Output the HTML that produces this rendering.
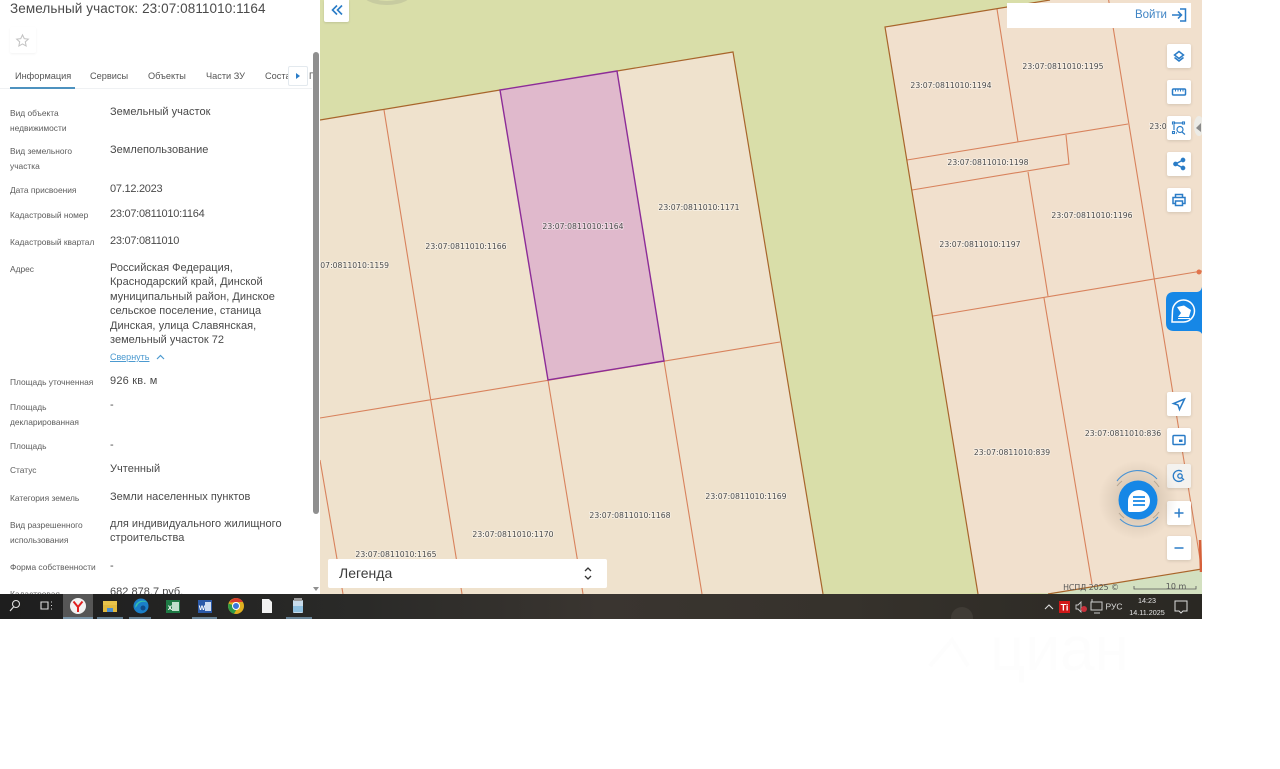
<!DOCTYPE html>
<html lang="ru"><head><meta charset="utf-8"><title>Земельный участок</title>
<style>
html,body{margin:0;padding:0;width:1280px;height:769px;overflow:hidden;background:#fff}
body{position:relative;font-family:"Liberation Sans",sans-serif}
.a{position:absolute;white-space:nowrap}
.l{position:absolute;left:10px;font-size:8.4px;line-height:14.5px;color:#5c5c5c;letter-spacing:0;white-space:nowrap}
.v{position:absolute;left:110px;font-size:11px;line-height:14.4px;color:#4a4a4a;letter-spacing:.02px;white-space:nowrap}
.n{letter-spacing:-.27px}
.t{position:absolute;top:70px;font-size:9.2px;line-height:12px;color:#555;white-space:nowrap}
.b{position:absolute;left:1167px;width:24px;height:24px;background:#fff;border-radius:2px;box-shadow:0 1px 3px rgba(0,0,0,.13)}
.b svg{display:block;width:24px;height:24px;fill:none;stroke:#2a7cc7;stroke-width:1.5}
.m text{font-family:"DejaVu Sans",sans-serif;font-size:7.7px;fill:#4c4c4c;stroke:#fff;stroke-opacity:.5;stroke-width:1.6px;paint-order:stroke;text-anchor:middle}
</style></head><body>

<svg class="a m" style="left:0;top:0" width="1202" height="594" viewBox="0 0 1202 594">
<rect x="320" y="0" width="882" height="594" fill="#d9dea9"/>
<polygon points="320,120 733,52 823,594 320,594" fill="#efe2cd"/>
<polygon points="885,27 1050,0 1202,0 1202,570 1050,593 978,594" fill="#f1e0cd"/>
<polygon points="1050,593 1202,570 1202,594 1040,594" fill="#d3e0c0"/>
<polygon points="500,90 617,71 664,361 548,380" fill="#e0b9cc"/>
<ellipse cx="387" cy="-8" rx="26" ry="13" fill="#c7cba0"/>
<ellipse cx="387" cy="-11" rx="22" ry="12" fill="#d9dea9"/>
<g fill="none" stroke="#d8825c" stroke-width="1.1">
<path d="M384,110L462,594M548,380L583,594M664,361L702,594M320,460L343,594M320,418L780,342"/>
<path d="M997,9L1018,142M907,160L1128,124M1107,-10L1201,565M1066,135L1069,164L912,190M1028,172L1048,296M933,316L1202,271M1044,298L1092,584"/>
</g>
<g fill="none" stroke="#a8652b" stroke-width="1.2">
<path d="M320,120L500,90M617,71L733,52L823,594"/>
<path d="M1050,0L885,27L978,594M1048,594L1202,569"/>
</g>
<path d="M617,71L500,90L548,380L664,361Z" fill="none" stroke="#8c2c98" stroke-width="1.4"/>
<path d="M1200,540L1201,572" stroke="#d6603a" stroke-width="2.5" fill="none"/>
<circle cx="1199" cy="272" r="2.5" fill="#e2744c"/>
<ellipse cx="1199" cy="126" rx="5" ry="10" fill="#ecebe6"/><path d="M1196,128l5,-5v9z" fill="#8a8a8a"/>
<text x="583" y="229">23:07:0811010:1164</text>
<text x="699" y="210">23:07:0811010:1171</text>
<text x="466" y="249">23:07:0811010:1166</text>
<text x="348.500" y="268">23:07:0811010:1159</text>
<text x="396" y="557">23:07:0811010:1165</text>
<text x="513" y="537">23:07:0811010:1170</text>
<text x="630" y="518">23:07:0811010:1168</text>
<text x="746" y="499">23:07:0811010:1169</text>
<text x="951" y="88">23:07:0811010:1194</text>
<text x="1063" y="69">23:07:0811010:1195</text>
<text x="988" y="165">23:07:0811010:1198</text>
<text x="1092" y="218">23:07:0811010:1196</text>
<text x="980" y="247">23:07:0811010:1197</text>
<text x="1012" y="455">23:07:0811010:839</text>
<text x="1123" y="436">23:07:0811010:836</text>
<text x="1158" y="129">23:0</text>
<text x="1091" y="590" style="font-size:7.800px;fill:#555;stroke:none;font-family:'DejaVu Sans'">НСПД 2025 ©</text>
<text x="1176" y="589" style="font-size:8px;fill:#555;stroke:none">10 m</text>
<path d="M1134,586v3h62v-3" stroke="#555" stroke-width=".8" fill="none"/>
</svg>

<!-- panel -->
<div class="a" style="left:0;top:0;width:320px;height:594px;background:#fff;overflow:hidden">
<div class="a" style="left:10px;top:0;font-size:13.5px;line-height:17px;color:#4a4a4a;letter-spacing:.09px">Земельный участок: 23:07:0811010:1164</div>
<div class="a" style="left:10px;top:27px;width:26px;height:26px;border-radius:2px;box-shadow:0 1px 2px rgba(0,0,0,.05)"></div>
<svg class="a" style="left:15px;top:33px" width="15" height="15" viewBox="0 0 24 24"><path d="M12,3l2.8,6 6.5,.8-4.8,4.4 1.3,6.5L12,17.5 6.2,20.7l1.3,-6.5L2.700,9.800 9.200,9Z" fill="none" stroke="#c4c4c4" stroke-width="1.7"/></svg>
<div class="t" style="left:15px">Информация</div>
<div class="t" style="left:90px">Сервисы</div>
<div class="t" style="left:148px">Объекты</div>
<div class="t" style="left:206px">Части ЗУ</div>
<div class="t" style="left:265px">Состав</div>
<div class="a" style="left:0;top:88px;width:312px;height:1px;background:#eff1f3"></div>
<div class="a" style="left:10px;top:87px;width:65px;height:2px;background:#4d92bf"></div>
<div class="a" style="left:288px;top:66px;width:20px;height:20px;background:#fff;border:1px solid #e3e9ee;box-sizing:border-box;border-radius:2px"></div>
<div class="a" style="left:296px;top:73px;width:0;height:0;border-left:4px solid #2a7cc7;border-top:3px solid transparent;border-bottom:3px solid transparent"></div>
<div class="a" style="left:309px;top:70px;font-size:9.200px;line-height:12px;color:#555">П</div>

<div class="l" style="top:106px">Вид объекта<br>недвижимости</div><div class="v" style="top:105px">Земельный участок</div>
<div class="l" style="top:144px">Вид земельного<br>участка</div><div class="v" style="top:143px">Землепользование</div>
<div class="l" style="top:183px">Дата присвоения</div><div class="v n" style="top:182px">07.12.2023</div>
<div class="l" style="top:208px">Кадастровый номер</div><div class="v n" style="top:207px">23:07:0811010:1164</div>
<div class="l" style="top:235px">Кадастровый квартал</div><div class="v n" style="top:234px">23:07:0811010</div>
<div class="l" style="top:262px">Адрес</div><div class="v" style="top:261px">Российская Федерация,<br>Краснодарский край, Динской<br>муниципальный район, Динское<br>сельское поселение, станица<br>Динская, улица Славянская,<br>земельный участок 72</div>
<div class="a" style="left:110px;top:351px;font-size:9px;line-height:12px;color:#4c9ad0;text-decoration:underline">Свернуть</div>
<svg class="a" style="left:156px;top:353px" width="9" height="8" viewBox="0 0 9 8"><path d="M1,6L4.500,2.500 8,6" fill="none" stroke="#4c9ad0" stroke-width="1.200"/></svg>
<div class="l" style="top:375px">Площадь уточненная</div><div class="v" style="top:374px;letter-spacing:.2px">926 кв. м</div>
<div class="l" style="top:400px">Площадь<br>декларированная</div><div class="v" style="top:398px">-</div>
<div class="l" style="top:439px">Площадь</div><div class="v" style="top:438px">-</div>
<div class="l" style="top:463px">Статус</div><div class="v" style="top:462px">Учтенный</div>
<div class="l" style="top:491px">Категория земель</div><div class="v" style="top:490px">Земли населенных пунктов</div>
<div class="l" style="top:518px">Вид разрешенного<br>использования</div><div class="v" style="top:517px">для индивидуального жилищного<br>строительства</div>
<div class="l" style="top:560px">Форма собственности</div><div class="v" style="top:559px">-</div>
<div class="l" style="top:587px">Кадастровая</div><div class="v" style="top:585px">682 878,7 руб.</div>

<div class="a" style="left:313px;top:52px;width:6px;height:462px;background:#8f8f8f;border-radius:3px"></div>
<div class="a" style="left:313px;top:587px;width:0;height:0;border-top:4px solid #8f8f8f;border-left:3px solid transparent;border-right:3px solid transparent"></div>
</div>

<!-- back -->
<div class="a" style="left:324px;top:0;width:25px;height:22px;background:#fff;border-radius:0 0 2px 2px;box-shadow:0 1px 2px rgba(0,0,0,.12)"></div>
<svg class="a" style="left:331px;top:4px" width="12" height="12" viewBox="0 0 12 12"><path d="M6,1.500L1.500,6 6,10.500M11,1.500L6.500,6 11,10.500" fill="none" stroke="#2a7cc7" stroke-width="1.600"/></svg>

<!-- legend -->
<div class="a" style="left:328px;top:559px;width:279px;height:29px;background:#fff;border-radius:2px"></div>
<div class="a" style="left:339px;top:565px;font-size:14px;line-height:17px;color:#3d3d3d;letter-spacing:0">Легенда</div>
<svg class="a" style="left:583px;top:566px" width="10" height="15" viewBox="0 0 10 15"><path d="M2,5L5,2 8,5M2,10L5,13 8,10" fill="none" stroke="#333" stroke-width="1.300"/></svg>

<!-- login -->
<div class="a" style="left:1007px;top:3px;width:184px;height:25px;background:#fff"></div>
<div class="a" style="left:1135px;top:8px;font-size:11.500px;line-height:14px;color:#3f84c4;letter-spacing:-.05px">Войти</div>
<svg class="a" style="left:1171px;top:7px" width="16" height="16" viewBox="0 0 16 16"><path d="M1,8H10M7,4.500L10.500,8 7,11.500M9,2H14.500V14H9" fill="none" stroke="#2a7cc7" stroke-width="1.500"/></svg>

<!-- side buttons -->
<div class="b" style="top:44px"><svg viewBox="0 0 24 24"><path d="M12,7.500L16.500,11 12,14.500 7.500,11Z"/><path d="M7.500,13.500L12,17 16.500,13.500"/></svg></div>
<div class="b" style="top:80px"><svg viewBox="0 0 24 24"><rect x="5.500" y="9" width="13" height="6" rx="1"/><path d="M8.500,9v2.500M11,9v2.500M13.500,9v2.500M16,9v2.500" stroke-width="1"/></svg></div>
<div class="b" style="top:116px"><svg viewBox="0 0 24 24"><path d="M8,7H15M7,9V14M9,17H10" stroke-width="1.200"/><rect x="5.500" y="6" width="2" height="2" stroke-width="1.100"/><rect x="15.500" y="6" width="2" height="2" stroke-width="1.100"/><rect x="5.500" y="15.500" width="2" height="2" stroke-width="1.100"/><circle cx="13" cy="13.500" r="3" stroke-width="1.200"/><path d="M15,16L18,18.500" stroke-width="1.200"/></svg></div>
<div class="b" style="top:152px"><svg viewBox="0 0 24 24"><path d="M16,8L8.500,12 16,16"/><circle cx="16" cy="8" r="1.600" fill="#2a7cc7"/><circle cx="8.500" cy="12" r="1.600" fill="#2a7cc7"/><circle cx="16" cy="16" r="1.600" fill="#2a7cc7"/></svg></div>
<div class="b" style="top:188px"><svg viewBox="0 0 24 24"><path d="M8.500,9V6.500h7V9M8.500,15.500H6V9.500h12v6h-2.500"/><rect x="8.500" y="13" width="7" height="4.500"/></svg></div>
<div class="b" style="top:392px"><svg viewBox="0 0 24 24"><path d="M17.500,7L6.500,11.500 11,13 12.500,17.500Z"/></svg></div>
<div class="b" style="top:428px"><svg viewBox="0 0 24 24"><rect x="6" y="7.500" width="12" height="9" rx="1"/><rect x="12" y="11.500" width="3.500" height="2.500" fill="#2a7cc7" stroke="none"/></svg></div>
<div class="b" style="top:464px;background:#f4f2ef"><svg viewBox="0 0 24 24"><path d="M15,7.500A5.500,5.500 0 1 0 15.500,16" stroke-width="1.300"/><circle cx="13" cy="12" r="2.200" stroke-width="1.300"/><path d="M14.500,13.500L17,16" stroke-width="1.300"/></svg></div>
<div class="b" style="top:501px"><svg viewBox="0 0 24 24"><path d="M12,7.500V16.500M7.500,12H16.500"/></svg></div>
<div class="b" style="top:536px"><svg viewBox="0 0 24 24"><path d="M7.500,12H16.500"/></svg></div>

<!-- blue tab -->
<svg class="a" style="left:1166px;top:286px" width="36" height="48" viewBox="0 0 36 48"><path d="M36,1C35,5 33,6 30,6H8Q0,6 0,14V37Q0,45 8,45H30C33,45 35,46 36,48Z" fill="#1687e6"/></svg>
<svg class="a" style="left:1169px;top:297px" width="29" height="29" viewBox="0 0 29 29"><path d="M3,25L3.500,13.500A11,11 0 1 1 14.500,25Z" fill="none" stroke="#fff" stroke-width="1.500"/><path d="M8,10L15,8.500 22,13 20,20H9L12,16Z" fill="#fff"/><path d="M9,21.500H21" stroke="#fff" stroke-width="1"/></svg>

<!-- chat -->
<div class="a" style="left:1098px;top:460px;width:80px;height:80px;border-radius:50%;background:radial-gradient(circle,rgba(100,80,60,.28),rgba(100,80,60,0) 70%)"></div>
<svg class="a" style="left:1110px;top:468px" width="56" height="64" viewBox="0 0 56 64">
<path d="M7,13A26,26 0 0 1 47,11" fill="none" stroke="#4a94d4" stroke-width="1.100"/>
<path d="M7,18A25,25 0 0 1 12,13M44,13A25,25 0 0 1 49,19" fill="none" stroke="#b5a692" stroke-width="1"/>
<path d="M10,51A26,26 0 0 0 48,49" fill="none" stroke="#4a94d4" stroke-width="1.100"/>
<path d="M9,45A25,25 0 0 0 14,50M43,50A25,25 0 0 0 49,44" fill="none" stroke="#b5a692" stroke-width="1"/>
<circle cx="28" cy="32" r="19.500" fill="#1687e6"/>
<path d="M18,43V33A11,11 0 1 1 29,44H19Z" fill="#fff"/>
<path d="M23,29H35M23,33H35M23,37H35" stroke="#1687e6" stroke-width="1.800"/>
</svg>

<!-- taskbar -->
<div class="a" style="left:0;top:594px;width:1202px;height:25px;background:linear-gradient(90deg,#1e1e1e 0,#2a2a28 30%,#3a3530 50%,#36322c 70%,#2a2823 100%)"></div>
<div class="a" style="left:63px;top:594px;width:30px;height:25px;background:#565656"></div>
<svg class="a" style="left:0;top:594px" width="320" height="25" viewBox="0 0 320 25">
<circle cx="16" cy="10" r="3.500" fill="none" stroke="#ddd" stroke-width="1.100"/><path d="M13.500,13L10,17" stroke="#ddd" stroke-width="1.200"/>
<path d="M41,8H48V15H41ZM51,8H52M51,11.500H52M51,15H52" fill="none" stroke="#ddd" stroke-width="1.100"/>
<circle cx="78" cy="12" r="8" fill="#f2f2f2"/><path d="M73.500,7.500L78,13V18M82.500,7.500L78,13" fill="none" stroke="#e02020" stroke-width="2"/>
<rect x="103" y="7" width="14" height="11" fill="#e8c34a"/><rect x="103" y="11" width="14" height="7" fill="#e0b93e"/><rect x="107" y="14" width="6" height="4" fill="#4a8fd0"/>
<circle cx="141" cy="12" r="7.500" fill="#1a7fc8"/><path d="M135,14A7.500,7.500 0 0 1 148,9C145,7 139,7 137,12Z" fill="#38c0a8"/><circle cx="143" cy="14" r="2.500" fill="#0f4c8a"/>
<rect x="166" y="6" width="14" height="13" fill="#1e7a44"/><rect x="172" y="8" width="7" height="9" fill="#bfe0cc"/><text x="170" y="16" font-size="8" fill="#fff" text-anchor="middle" font-family="Liberation Sans" font-weight="bold">x</text>
<rect x="198" y="6" width="14" height="13" fill="#2c5aa8"/><rect x="205" y="8" width="6" height="9" fill="#cfdcf0"/><text x="202" y="16" font-size="8" fill="#fff" text-anchor="middle" font-family="Liberation Sans" font-weight="bold">w</text>
<circle cx="236" cy="12" r="8" fill="#e0b020"/><path d="M236,4A8,8 0 0 1 243,8H236L229.500,8.500A8,8 0 0 1 236,4Z" fill="#d83b2e"/><path d="M228.500,9.500A8,8 0 0 0 234,19.800L238,13Z" fill="#2c9a48"/><circle cx="236" cy="12" r="3.500" fill="#3a78d8" stroke="#fff"/>
<path d="M262,5H269L272,8V19H262Z" fill="#f2f2f2"/>
<rect x="293" y="6" width="10" height="13" rx="1" fill="#c8dcec"/><rect x="294" y="4" width="8" height="3" fill="#999"/><rect x="293" y="12" width="10" height="6" fill="#8fc0e0"/>
<path d="M63,24H93M97,24H123M129,24H151M192,24H217M286,24H312" stroke="#8db8d8" stroke-width="1.200"/>
</svg>
<svg class="a" style="left:1040px;top:594px" width="162" height="25" viewBox="0 0 162 25">
<path d="M5,15L9,11 13,15" fill="none" stroke="#ddd" stroke-width="1.100"/>
<rect x="19" y="7" width="11" height="12" fill="#d01818"/><text x="24.500" y="16.500" font-size="9" font-weight="bold" fill="#fff" text-anchor="middle" font-family="Liberation Sans">Ti</text>
<path d="M36,11H38L41,8V18L38,15H36Z" fill="none" stroke="#ccc" stroke-width=".9"/><circle cx="44" cy="15" r="3" fill="#c8303a"/>
<path d="M51,8H62V16H51ZM52,8V5M54,19H60" fill="none" stroke="#ccc" stroke-width="1"/>
<text x="74" y="15.500" font-size="8.500" fill="#ddd" text-anchor="middle" font-family="Liberation Sans">РУС</text>
<path d="M135,7H147V17H143L141,19 139,17H135Z" fill="none" stroke="#ddd" stroke-width="1"/>
</svg>
<div class="a" style="left:1125px;top:595px;width:44px;text-align:center;font-size:7.200px;line-height:12px;color:#e4e4e4">14:23<br>14.11.2025</div>
<div class="a" style="left:951px;top:607px;width:22px;height:12px;border-radius:11px 11px 0 0;background:#403c36"></div>

<!-- faint watermark -->
<div class="a" style="left:990px;top:615px;font-size:62px;line-height:70px;color:#fdfdfd">циан</div>
<svg class="a" style="left:928px;top:636px" width="48" height="32" viewBox="0 0 48 32"><path d="M2,30L24,4 40,30" fill="none" stroke="#fdfdfd" stroke-width="4"/></svg>
</body></html>
